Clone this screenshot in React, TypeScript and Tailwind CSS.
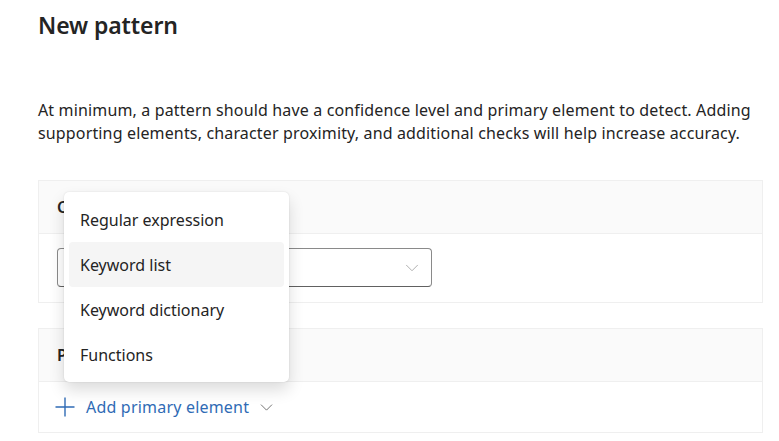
import { ChevronDown } from "lucide-react";

const items = ["Regular expression", "Keyword list", "Keyword dictionary", "Functions"];

export default function App() {
  return (
    <div
      className="min-h-[441px] w-[779px] bg-white pl-[38px] pr-[16px] pt-[9px] text-[#242424]"
      style={{ fontFamily: '"Noto Sans", "Open Sans", sans-serif' }}
    >
      <h1 className="text-[23px] font-semibold leading-[32px] tracking-[-0.1px]">New pattern</h1>

      <p className="mt-[58px] text-[16px] leading-[23px] tracking-[0.15px]">
        At minimum, a pattern should have a confidence level and primary element to detect. Adding
        supporting elements, character proximity, and additional checks will help increase accuracy.
      </p>

      <div className="relative mt-[35px]">
        {/* confidence level card */}
        <div className="border border-[#efefef]">
          <div className="flex h-[53px] items-center bg-[#fafafa] px-[18px] border-b border-[#efefef]">
            <span className="text-[16px] font-semibold">Confidence level</span>
          </div>
          <div className="px-[18px] pt-[14px] pb-[15px]">
            <div className="flex h-[39px] w-[375px] items-center justify-end rounded-[4px] border border-[#8a8a8a] border-b-[#616161] pr-[8px]">
              <ChevronDown size={22} strokeWidth={1} className="text-[#a8a8a8]" />
            </div>
          </div>
        </div>

        {/* primary element card */}
        <div className="mt-[25px] border border-[#efefef]">
          <div className="flex h-[53px] items-center bg-[#fafafa] px-[18px] border-b border-[#efefef]">
            <span className="text-[16px] font-semibold">Primary element</span>
          </div>
          <div className="flex h-[50px] items-center px-[16px]">
            <button className="flex items-center text-[#2f6bb5]">
              <svg width="20" height="20" viewBox="0 0 20 20" className="mr-[11px]">
                <path d="M10 0.5v19M0.5 10h19" stroke="currentColor" strokeWidth="1.4" />
              </svg>
              <span className="text-[16px] tracking-[0.2px]">Add primary element</span>
              <ChevronDown size={21} strokeWidth={1} className="ml-[7px] text-[#616161]" />
            </button>
          </div>
        </div>

        {/* dropdown menu */}
        <div className="absolute left-[26px] top-[12px] w-[225px] rounded-[5px] bg-white p-[5px] shadow-[0_8px_16px_rgba(0,0,0,0.14),0_0_2px_rgba(0,0,0,0.12)]">
          {items.map((it, i) => (
            <div
              key={it}
              className={`flex h-[45px] items-center rounded-[4px] px-[11px] text-[16px] ${
                i === 1 ? "bg-[#f5f5f5]" : ""
              }`}
            >
              {it}
            </div>
          ))}
        </div>
      </div>
    </div>
  );
}
